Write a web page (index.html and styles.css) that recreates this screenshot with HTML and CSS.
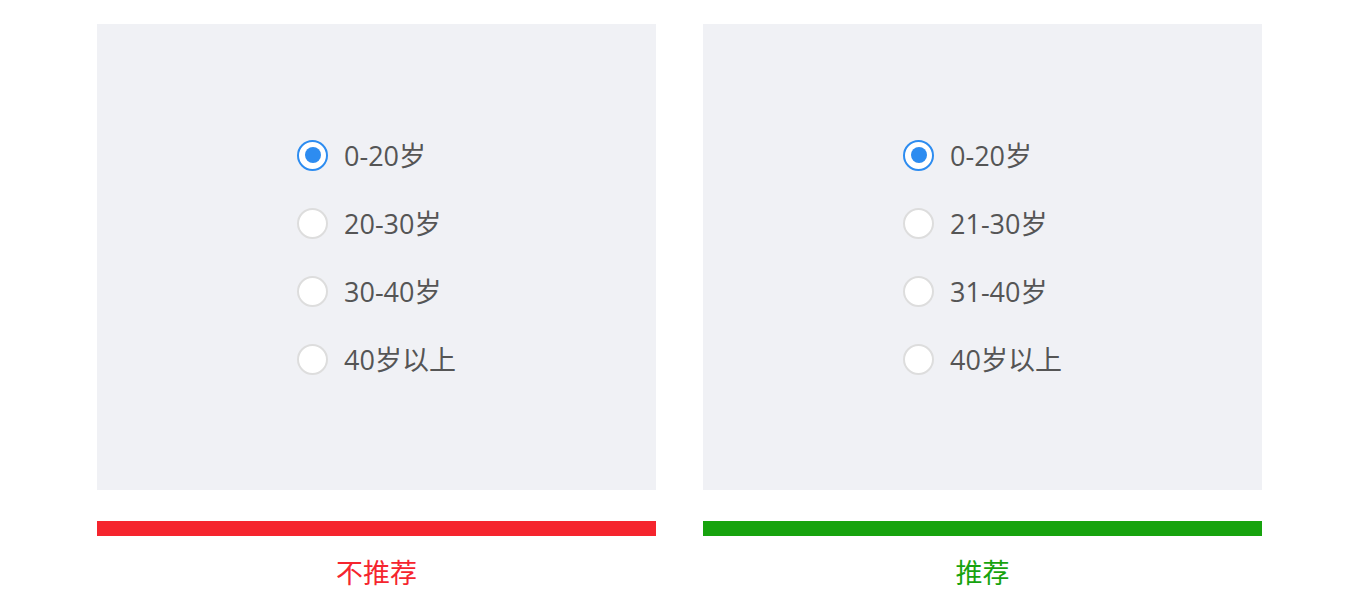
FILE: index.html
```html
<!DOCTYPE html>
<html lang="zh">
<head>
  <meta charset="UTF-8">
  <meta name="viewport" content="width=device-width, initial-scale=1.0">
  <title>单选框示例</title>
  <link rel="stylesheet" href="styles.css">
</head>
<body>
  <div class="compare">
    <div class="case">
      <div class="panel">
        <div class="options">
          <label class="option"><span class="radio checked"></span>0-20岁</label>
          <label class="option"><span class="radio"></span>20-30岁</label>
          <label class="option"><span class="radio"></span>30-40岁</label>
          <label class="option"><span class="radio"></span>40岁以上</label>
        </div>
      </div>
      <div class="bar bad"></div>
      <p class="verdict bad">不推荐</p>
    </div>

    <div class="case">
      <div class="panel">
        <div class="options">
          <label class="option"><span class="radio checked"></span>0-20岁</label>
          <label class="option"><span class="radio"></span>21-30岁</label>
          <label class="option"><span class="radio"></span>31-40岁</label>
          <label class="option"><span class="radio"></span>40岁以上</label>
        </div>
      </div>
      <div class="bar good"></div>
      <p class="verdict good">推荐</p>
    </div>
  </div>
</body>
</html>
```

FILE: styles.css
```css
body {
  margin: 0;
  background: #fff;
  font-family: "Noto Sans CJK SC", "Noto Sans", sans-serif;
}

.compare {
  display: flex;
  justify-content: center;
  gap: 47px;
  padding-top: 24px;
}

.case {
  width: 559px;
}

.panel {
  height: 466px;
  background-color: #f0f1f5;
  display: flex;
  justify-content: center;
  align-items: center;
}

.options {
  display: flex;
  flex-direction: column;
  gap: 37px;
  margin-left: 0;
}

.option {
  display: flex;
  align-items: center;
  height: 31px;
  font-family: "Open Sans", "Noto Sans CJK SC", sans-serif;
  font-size: 27px;
  color: #555;
  line-height: 31px;
}

.radio {
  width: 31px;
  height: 31px;
  border-radius: 50%;
  border: 2px solid #dddddd;
  background-color: #fff;
  box-sizing: border-box;
  margin-right: 16px;
  display: flex;
  justify-content: center;
  align-items: center;
}

.radio.checked {
  border-color: #2d8cf0;
}

.radio.checked::after {
  content: "";
  width: 16px;
  height: 16px;
  border-radius: 50%;
  background-color: #2d8cf0;
}

.bar {
  height: 15px;
  margin-top: 31px;
}

.bar.bad {
  background-color: #f5252e;
}

.bar.good {
  background-color: #17a30e;
}

.verdict {
  margin: 18px 0 0;
  text-align: center;
  font-size: 27px;
  line-height: 36px;
}

.verdict.bad {
  color: #f5252e;
}

.verdict.good {
  color: #17a30e;
}
```
